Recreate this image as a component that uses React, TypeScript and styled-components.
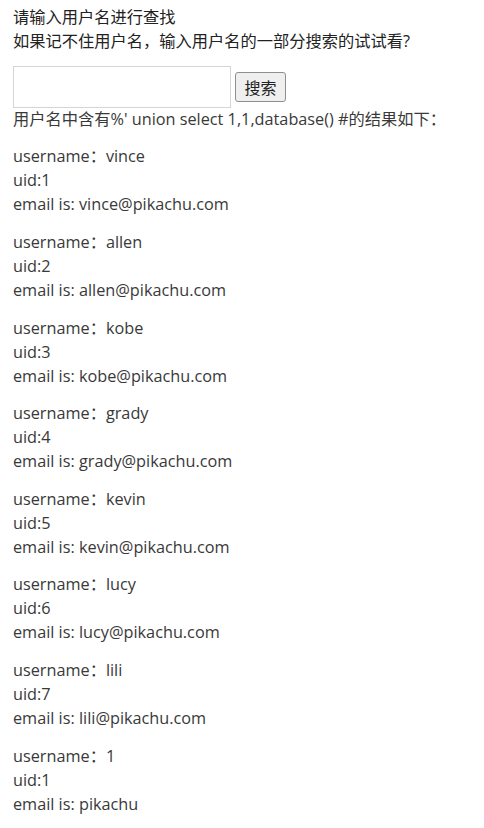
import React, { useState } from "react";
import styled, { createGlobalStyle } from "styled-components";

const GlobalStyle = createGlobalStyle`
  html, body {
    margin: 0;
    padding: 0;
    background: #fff;
  }
  body {
    font-family: "Open Sans", "Noto Sans CJK SC", sans-serif;
    font-size: 16.25px;
    line-height: 24px;
    color: #393939;
  }
`;

const Page = styled.div`
  padding: 5px 13px 0;
`;

const Para = styled.p<{ $strong?: boolean }>`
  margin: 0 0 13.6px;
  color: ${(p) => (p.$strong ? "#222" : "inherit")};
`;

const SearchForm = styled.form`
  display: flex;
  align-items: center;
  gap: 4px;
  margin: -0.6px 0 -1.2px;
`;

const SearchInput = styled.input`
  box-sizing: border-box;
  width: 218px;
  height: 42px;
  border: 1px solid #d5d5d5;
  padding: 4px 6px;
  font-size: 14px;
  font-family: inherit;
  color: #393939;
  outline: none;
`;

const SearchButton = styled.button`
  box-sizing: border-box;
  height: 30px;
  width: 51px;
  padding: 0;
  border: 1px solid #8f8f8f;
  border-radius: 3px;
  background: #efefef;
  font-family: "Open Sans", "Noto Sans CJK SC", sans-serif;
  font-size: 16px;
  color: #222;
`;

const users = [
  { name: "vince", uid: "1", email: "vince@pikachu.com" },
  { name: "allen", uid: "2", email: "allen@pikachu.com" },
  { name: "kobe", uid: "3", email: "kobe@pikachu.com" },
  { name: "grady", uid: "4", email: "grady@pikachu.com" },
  { name: "kevin", uid: "5", email: "kevin@pikachu.com" },
  { name: "lucy", uid: "6", email: "lucy@pikachu.com" },
  { name: "lili", uid: "7", email: "lili@pikachu.com" },
  { name: "1", uid: "1", email: "pikachu" },
];

const App: React.FC = () => {
  const [query, setQuery] = useState<string>("");

  return (
    <Page>
      <GlobalStyle />
      <Para $strong>
        请输入用户名进行查找
        <br />
        如果记不住用户名，输入用户名的一部分搜索的试试看?
      </Para>
      <SearchForm onSubmit={(e) => e.preventDefault()}>
        <SearchInput
          value={query}
          onChange={(e) => setQuery(e.target.value)}
        />
        <SearchButton type="submit">搜索</SearchButton>
      </SearchForm>
      <Para>用户名中含有%' union select 1,1,database() #的结果如下：</Para>
      {users.map((u, i) => (
        <Para key={i}>
          username：{u.name}
          <br />
          uid:{u.uid}
          <br />
          email is: {u.email}
        </Para>
      ))}
    </Page>
  );
};

export default App;
